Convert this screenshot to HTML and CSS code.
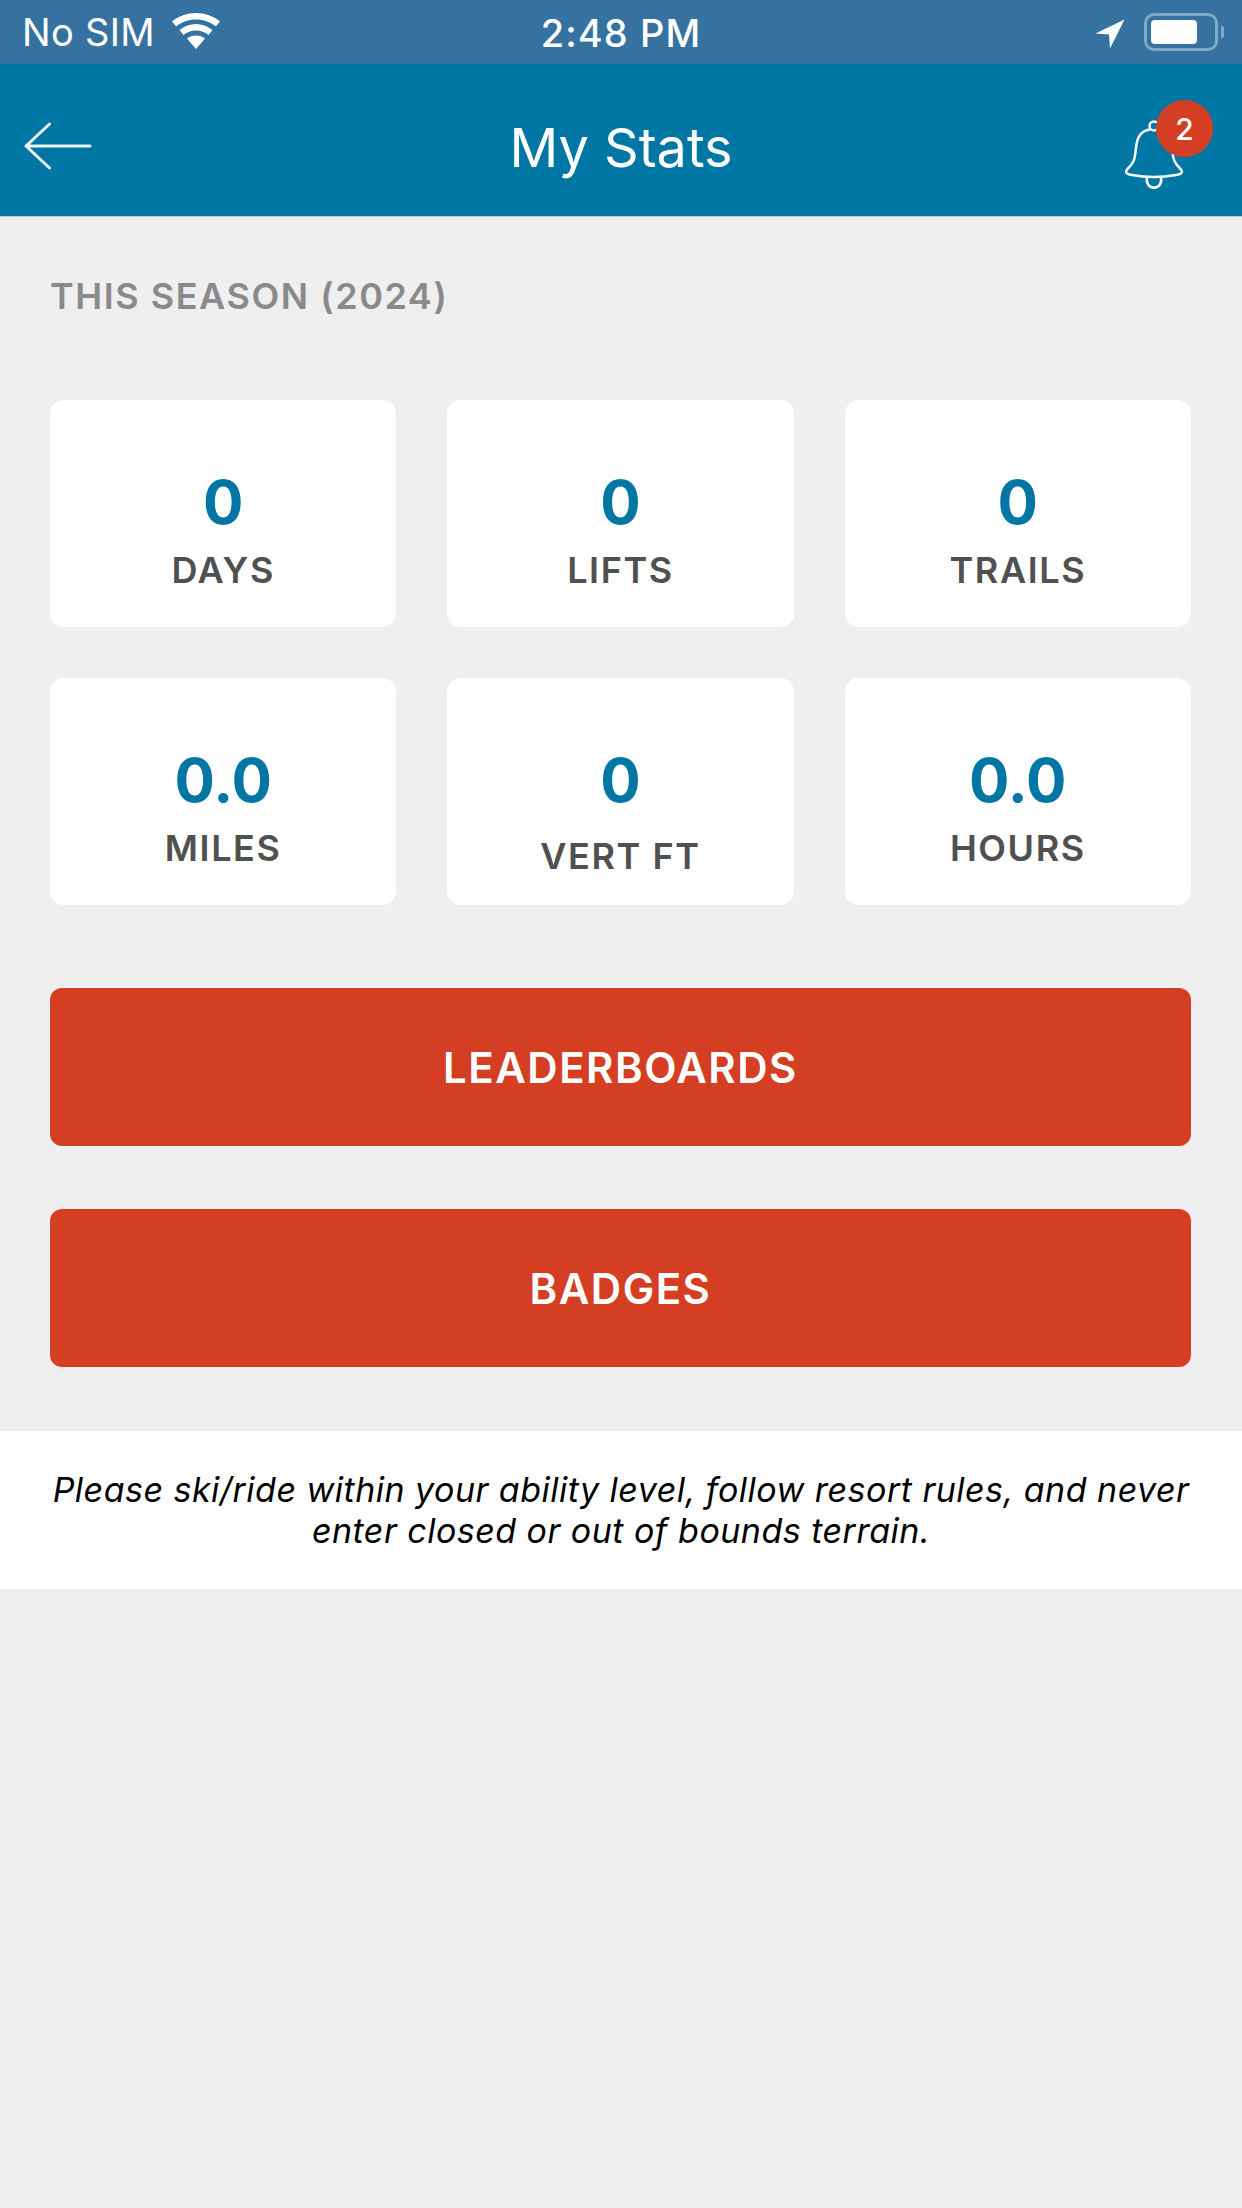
FILE: index.html
```html
<!DOCTYPE html>
<html lang="en">
<head>
<meta charset="utf-8">
<title>My Stats</title>
<link rel="stylesheet" href="styles.css">
</head>
<body>
<div class="status">
  <div class="status-left">
    <span class="carrier">No SIM</span>
    <svg class="wifi" width="48" height="36" viewBox="0 0 48 36"><path d="M24 0C15 0 7 3 0 8.500L4 13.500C10 8.800 16.500 6.500 24 6.500S38 8.800 44 13.500L48 8.500C41 3 33 0 24 0Z" fill="#fff"/><path d="M24 11C18 11 12.500 13 7.500 17L11.500 22C15 19 19 17.500 24 17.500S33 19 36.500 22L40.500 17C35.500 13 30 11 24 11Z" fill="#fff"/><path d="M24 22.500C20.500 22.500 17.500 23.500 15 25.500L24 36L33 25.500C30.500 23.500 27.500 22.500 24 22.500Z" fill="#fff"/></svg>
  </div>
  <span class="clock">2:48 PM</span>
  <div class="status-right">
    <svg class="loc" width="32" height="32" viewBox="0 0 32 32"><path d="M30.500 1.500L1.500 15.500L15 16.500L16 30.500Z" fill="#fff"/></svg>
    <div class="battery"><div class="battery-fill"></div></div>
    <div class="battery-cap"></div>
  </div>
</div>
<header class="nav">
  <svg class="back" width="68" height="48" viewBox="0 0 68 48"><path d="M25.500 2L2 24L25.500 46M2 24H66" fill="none" stroke="#fff" stroke-width="3" stroke-linecap="round" stroke-linejoin="round" opacity=".92"/></svg>
  <h1 class="title">My Stats</h1>
  <div class="bell-wrap">
    <svg class="bell" width="62" height="72" viewBox="0 0 62 72"><g fill="none" stroke="#fff" stroke-width="2.500"><circle cx="30" cy="6" r="4.500"/><path d="M26 9.500C16 11 13 18 12 28C11 39 10 43 3.500 49C0 53 4 54.500 8 55C22 57.500 38 57.500 52 55C56 54.500 60 53 56.500 49C50 43 49 39 48 28C47 18 44 11 34 9.500"/><path d="M23 57.500C20.500 71 39.500 71 37 57.500"/></g></svg>
    <span class="badge">2</span>
  </div>
</header>
<main class="content">
  <h2 class="season">THIS SEASON (2024)</h2>
  <section class="grid">
    <div class="card"><div class="num">0</div><div class="lbl">DAYS</div></div>
    <div class="card"><div class="num">0</div><div class="lbl">LIFTS</div></div>
    <div class="card"><div class="num">0</div><div class="lbl">TRAILS</div></div>
    <div class="card"><div class="num">0.0</div><div class="lbl">MILES</div></div>
    <div class="card"><div class="num">0</div><div class="lbl lbl-low">VERT FT</div></div>
    <div class="card"><div class="num">0.0</div><div class="lbl">HOURS</div></div>
  </section>
  <a class="btn btn-first">LEADERBOARDS</a>
  <a class="btn">BADGES</a>
</main>
<footer class="note">Please ski/ride within your ability level, follow resort rules, and never<br>enter closed or out of bounds terrain.</footer>
</body>
</html>
```
FILE: styles.css
```css
* { box-sizing: border-box; }
html, body { margin: 0; padding: 0; }
body {
  width: 1242px;
  height: 2208px;
  background: #efefef;
  font-family: Inter, "Liberation Sans", sans-serif;
  overflow: hidden;
}
.status {
  height: 64px;
  background: #35729f;
  color: #fff;
  display: grid;
  grid-template-columns: 1fr auto 1fr;
  align-items: center;
  padding: 0 22px;
}
.status-left { display: flex; align-items: center; gap: 17px; }
.carrier { font-size: 38px; font-weight: 400; letter-spacing: .3px; }
.wifi { margin-top: -3px; }
.clock { font-size: 38px; font-weight: 500; letter-spacing: 1.1px; position: relative; top: 1px; }
.status-right { display: flex; align-items: center; justify-content: flex-end; margin-right: -4px; }
.loc { margin-right: 18px; margin-top: 3px; }
.battery {
  width: 74px;
  height: 38px;
  border: 3px solid #7eabc8;
  border-radius: 10px;
  padding: 4px;
}
.battery-fill { width: 46px; height: 24px; background: #fff; border-radius: 4px; }
.battery-cap { width: 3px; height: 12px; background: #7eabc8; margin: 0 0 0 3px; border-radius: 0 2px 2px 0; }
.nav {
  height: 153px;
  background: #0076a5;
  border-bottom: 1px solid #c9c9c9;
  display: grid;
  grid-template-columns: 1fr auto 1fr;
  align-items: center;
  padding: 0 24px;
}
.back { display: block; margin-top: 12px; }
.title { margin: 14px 0 0; color: #fff; font-size: 54px; font-weight: 400; }
.bell-wrap { justify-self: end; position: relative; width: 62px; height: 72px; margin: 0 32px 0 0; top: 16px; }
.bell { display: block; }
.badge {
  position: absolute;
  left: 32px;
  top: -20px;
  width: 57px;
  height: 57px;
  border-radius: 50%;
  background: #d43f23;
  color: #fff;
  font-size: 30px;
  font-weight: 500;
  display: flex;
  align-items: center;
  justify-content: center;
}
.content { padding: 57px 51px 0 50px; }
.season { margin: 0 0 82px; font-size: 36px; line-height: 44px; font-weight: 600; color: #8a8a8a; letter-spacing: 1.55px; }
.grid { display: grid; grid-template-columns: repeat(3, 1fr); gap: 51px; margin-bottom: 83px; }
.card {
  height: 227px;
  background: #fff;
  border-radius: 14px;
  display: flex;
  flex-direction: column;
  align-items: center;
  padding-top: 66px;
}
.num { font-size: 60px; line-height: 72px; font-weight: 700; color: #0076a5; }
.lbl { font-size: 36px; line-height: 44px; font-weight: 600; color: #505050; margin-top: 10px; letter-spacing: 1.6px; }
.lbl-low { margin-top: 18px; }
.btn {
  display: flex;
  height: 158px;
  margin-bottom: 63px;
  align-items: center;
  justify-content: center;
  background: #d43f23;
  color: #fff;
  border-radius: 12px;
  font-size: 42px;
  font-weight: 600;
  letter-spacing: 1.5px;
}
.btn:last-child { margin-bottom: 64px; }
.note {
  height: 158px;
  background: #fff;
  display: flex;
  align-items: center;
  justify-content: center;
  text-align: center;
  font-size: 34px;
  line-height: 41px;
  font-style: italic;
  color: #000;
  letter-spacing: .48px;
}
```
